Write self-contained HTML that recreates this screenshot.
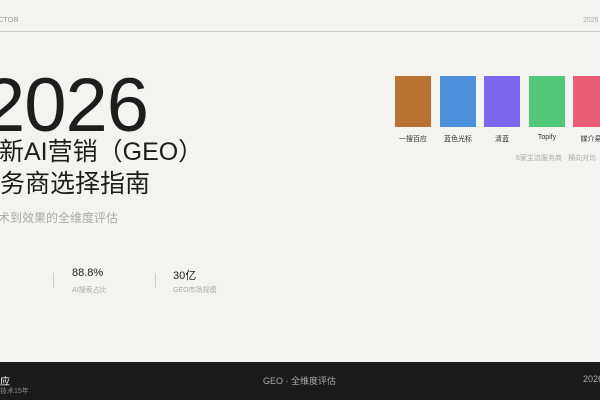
<!DOCTYPE html>
<html><head><meta charset="utf-8"><style>
html,body{margin:0;padding:0}
body{width:600px;height:400px;overflow:hidden;position:relative;background:#f4f3ef;font-family:"Liberation Sans","Noto Sans CJK SC",sans-serif;color:#1d1d1d}
.a{position:absolute;white-space:nowrap}
.sw{position:absolute;top:76px;width:36px;height:51px}
.lb{position:absolute;top:134px;width:44px;text-align:center;font-size:7px;color:#333}
</style></head><body>
<div class="a" style="left:-20px;top:17px;font-size:7px;color:#999;letter-spacing:.3px">DIRECTOR</div>
<div class="a" style="left:583px;top:17px;font-size:7px;color:#aaa">2026</div>
<div style="position:absolute;left:0;top:31px;width:600px;height:1px;background:#cfcdc8"></div>

<div class="a" style="left:-17px;top:68px;font-size:76px;line-height:76px;letter-spacing:-1px">2026</div>
<div class="a" style="left:-26px;top:137px;font-size:25px;line-height:30px">最新AI营销（GEO）</div>
<div class="a" style="left:-25px;top:169px;font-size:25px;line-height:30px">服务商选择指南</div>
<div class="a" style="left:-26px;top:209px;font-size:12px;color:#aaa">从技术到效果的全维度评估</div>

<div class="sw" style="left:395px;background:#b87333"></div>
<div class="sw" style="left:440px;background:#4a90d9"></div>
<div class="sw" style="left:484px;background:#7b68ee"></div>
<div class="sw" style="left:529px;background:#50c878"></div>
<div class="sw" style="left:573px;background:#e85d75"></div>
<div class="lb" style="left:391px">一搜百应</div>
<div class="lb" style="left:436px">蓝色光标</div>
<div class="lb" style="left:480px">清蓝</div>
<div class="lb" style="left:525px">Topify</div>
<div class="lb" style="left:569px">媒介易</div>
<div class="a" style="left:516px;top:153px;font-size:7px;color:#aaa">6家主流服务商 · 横向对比</div>

<div class="a" style="left:-20px;top:285px;font-size:7px;color:#aaa">日活</div>
<div style="position:absolute;left:53px;top:273px;width:1px;height:15px;background:#ccc"></div>
<div class="a" style="left:72px;top:267px;font-size:11px">88.8%</div>
<div class="a" style="left:72px;top:285px;font-size:7px;color:#aaa">AI搜索占比</div>
<div style="position:absolute;left:155px;top:273px;width:1px;height:15px;background:#ccc"></div>
<div class="a" style="left:173px;top:267px;font-size:11px">30亿</div>
<div class="a" style="left:173px;top:285px;font-size:7px;color:#aaa">GEO市场规模</div>

<div style="position:absolute;left:0;top:362px;width:600px;height:38px;background:#1b1b1b"></div>
<div class="a" style="left:-30px;top:373px;font-size:10px;color:#fff">一搜百应</div>
<div class="a" style="left:-7px;top:386px;font-size:7px;color:#888">专技术15年</div>
<div class="a" style="left:263px;top:374px;font-size:9px;color:#aaa">GEO · 全维度评估</div>
<div class="a" style="left:583px;top:374px;font-size:9px;color:#aaa">2026</div>
</body></html>
